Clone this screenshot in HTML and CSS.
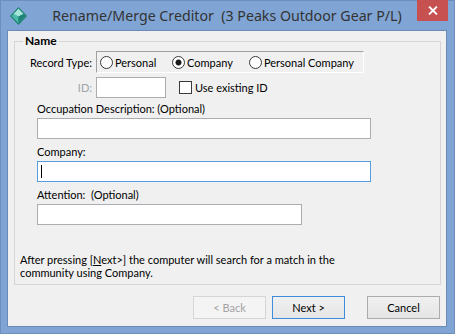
FILE: index.html
```html
<!DOCTYPE html>
<html>
    <head>
        <meta charset="utf-8" />
        <title>Rename/Merge Creditor</title>
        <link rel="stylesheet" href="styles.css">
    </head>
    <body>
        <div class="window">
            <div class="titlebar">
                <svg class="app-icon" width="17" height="18" viewBox="0 0 17 18">
                    <polygon points="8.5,0.5 16.5,9 8.5,17.5 0.5,9" fill="#2a9a8b" stroke="#237a70" stroke-width="1"/>
                    <polygon points="8.5,1.8 3.6,7 8.5,9.6 13.4,7" fill="#a6e6da"/>
                    <polygon points="3.6,7 8.5,9.6 8.5,16 1.8,9" fill="#4dbaa9"/>
                    <polygon points="13.4,7 8.5,9.6 8.5,16 15.2,9" fill="#1f8276"/>
                </svg>
                <span class="title">Rename/Merge Creditor&nbsp; (3 Peaks Outdoor Gear P/L)</span>
                <div class="close">
                    <svg width="10" height="9" viewBox="0 0 10 9">
                        <path d="M1 0.5 L9 8.5 M9 0.5 L1 8.5" stroke="#fff" stroke-width="1.8"/>
                    </svg>
                </div>
            </div>
            <div class="client">
                <fieldset class="group">
                    <legend>Name</legend>
                    <div class="row type-row">
                        <span class="row-label">Record Type:</span>
                        <div class="radio-box">
                            <label class="opt opt-personal"><span class="radio"></span>Personal</label>
                            <label class="opt opt-company"><span class="radio checked"></span>Company</label>
                            <label class="opt"><span class="radio"></span>Personal Company</label>
                        </div>
                    </div>
                    <div class="row id-row">
                        <span class="row-label disabled">ID:</span>
                        <span class="textbox id-box"></span>
                        <label class="check"><span class="checkbox"></span>Use existing ID</label>
                    </div>
                    <div class="field">
                        <div class="field-label">Occupation Description: (Optional)</div>
                        <div class="textbox wide"></div>
                    </div>
                    <div class="field">
                        <div class="field-label">Company:</div>
                        <div class="textbox wide focused"><span class="caret"></span></div>
                    </div>
                    <div class="field">
                        <div class="field-label">Attention:&nbsp; (Optional)</div>
                        <div class="textbox short"></div>
                    </div>
                    <p class="note">After pressing [<span class="key">N</span>ext&gt;] the computer will search for a match in the<br>community using Company.</p>
                </fieldset>
                <div class="buttons">
                    <button class="btn back" disabled>&lt; Back</button>
                    <button class="btn next">Next &gt;</button>
                    <button class="btn cancel">Cancel</button>
                </div>
            </div>
        </div>
    </body>
</html>
```

FILE: styles.css
```css
            /** Dialog window **/

            html, body {
              margin: 0;
              padding: 0;
            }
            body {
              font-family: Lato, "Noto Sans", sans-serif;
              font-size: 11px;
              color: #000;
            }
            .window {
              position: relative;
              width: 455px;
              height: 334px;
              box-sizing: border-box;
              border: 1px solid #6e8fbb;
              background: #80a5d4;
              padding: 0 7px 6px 6px;
              display: flex;
              flex-direction: column;
            }
            .titlebar {
              height: 29px;
              flex: none;
              display: flex;
              align-items: center;
              justify-content: center;
            }
            .title {
              font-family: "Noto Sans", sans-serif;
              font-size: 14.2px;
              line-height: 18px;
              color: #333;
            }
            .app-icon {
              position: absolute;
              left: 9px;
              top: 6px;
            }
            .close {
              position: absolute;
              top: -1px;
              right: 6px;
              width: 31px;
              height: 21px;
              background: #c75050;
              display: flex;
              align-items: center;
              justify-content: center;
            }
            .client {
              flex: 1;
              border: 1px solid #6a8bb8;
              background: #f0f0f0;
              display: flex;
              flex-direction: column;
            }

            /** Group box **/

            .group {
              flex: 1;
              margin: 2px 5px 0 6px;
              padding: 0;
              border: 1px solid #d5d5d5;
              min-width: 0;
            }
            .group legend {
              margin-left: 8px;
              padding: 0 2px;
              font-size: 12px;
              font-weight: bold;
              line-height: 16px;
            }
            .row {
              display: flex;
              align-items: center;
            }
            .row-label {
              width: 81px;
              padding-right: 4px;
              box-sizing: border-box;
              text-align: right;
              flex: none;
            }
            .row-label.disabled {
              color: #a3a3a3;
            }
            .type-row {
              margin-top: 2px;
            }
            .radio-box {
              width: 268px;
              height: 22px;
              box-sizing: border-box;
              border: 1px solid;
              border-color: #a0a0a0 #fff #fff #a0a0a0;
              padding-left: 3px;
              display: flex;
              align-items: center;
            }
            .opt {
              display: flex;
              align-items: center;
              white-space: nowrap;
            }
            .opt-personal {
              width: 72px;
            }
            .opt-company {
              width: 77px;
            }
            .radio {
              width: 13px;
              height: 13px;
              box-sizing: border-box;
              border: 1px solid #3a3a3a;
              border-radius: 50%;
              background: #fff;
              margin-right: 2px;
              flex: none;
            }
            .radio.checked {
              background: radial-gradient(circle, #1a1a1a 2.6px, #fff 3.4px);
            }
            .id-row {
              margin-top: 4px;
            }
            .textbox {
              height: 21px;
              box-sizing: border-box;
              border: 1px solid #abadb3;
              background: #fff;
            }
            .id-box {
              width: 70px;
            }
            .check {
              display: flex;
              align-items: center;
              margin-left: 13px;
            }
            .checkbox {
              width: 13px;
              height: 13px;
              box-sizing: border-box;
              border: 1px solid #3a3a3a;
              background: #fff;
              margin-right: 3px;
            }
            .field {
              margin: 3px 0 0 22px;
            }
            .field + .field {
              margin-top: 5px;
            }
            .field-label {
              line-height: 15px;
              margin-bottom: 2px;
            }
            .wide {
              width: 334px;
            }
            .short {
              width: 265px;
            }
            .textbox.focused {
              border-color: #569de5;
              display: flex;
              align-items: center;
              padding-left: 3px;
            }
            .caret {
              width: 1px;
              height: 13px;
              background: #000;
            }
            .note {
              margin: 28px 0 0 5px;
              line-height: 13px;
            }
            .key {
              text-decoration: underline;
            }

            /** Buttons **/

            .buttons {
              display: flex;
              justify-content: flex-end;
              margin: 11px 6px 7px 0;
            }
            .btn {
              width: 73px;
              height: 23px;
              box-sizing: border-box;
              border: 1px solid #acacac;
              background: linear-gradient(#f0f0f0, #e5e5e5);
              font-family: inherit;
              font-size: 11px;
              color: #000;
              padding: 0;
            }
            .back {
              margin-right: 6px;
              border-color: #d5d5d5;
              background: #f4f4f4;
              color: #a3a3a3;
            }
            .next {
              margin-right: 22px;
              border-color: #3c8de0;
            }
```
